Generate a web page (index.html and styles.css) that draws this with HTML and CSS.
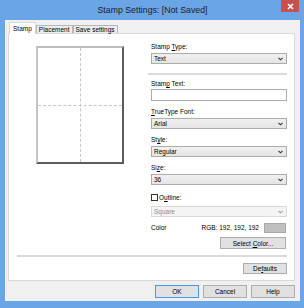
FILE: index.html
```html
<!DOCTYPE html>
<html lang="en">
<head>
  <meta charset="UTF-8" />
  <title>Stamp Settings</title>
  <link rel="stylesheet" href="styles.css">
</head>
<body>
  <div class="window">
    <div class="titlebar">
      Stamp Settings: [Not Saved]
      <span class="close">
        <svg width="7" height="7" viewBox="0 0 7 7"><path d="M1 1 L6 6 M6 1 L1 6" stroke="#fff" stroke-width="1.6" fill="none"/></svg>
      </span>
    </div>

    <div class="client">
      <div class="tabs">
        <span class="tab active">Stamp</span>
        <span class="tab">Placement</span>
        <span class="tab">Save settings</span>
      </div>

      <div class="panel">
        <div class="top">
          <div class="preview">
            <i class="vline"></i>
            <i class="hline"></i>
          </div>

          <div class="fields">
            <div class="group">
              <label class="caption">Stamp <u>T</u>ype:</label>
              <div class="combo"><span>Text</span><svg class="arrow" width="5" height="4" viewBox="0 0 5 4"><path d="M0.5 0.8 L2.5 2.8 L4.5 0.8" stroke="#333" stroke-width="1.1" fill="none"/></svg></div>
            </div>
            <div class="rule"></div>
            <div class="group">
              <label class="caption">Stam<u>p</u> Text:</label>
              <div class="textbox"></div>
            </div>
            <div class="group">
              <label class="caption"><u>T</u>rueType Font:</label>
              <div class="combo"><span>Arial</span><svg class="arrow" width="5" height="4" viewBox="0 0 5 4"><path d="M0.5 0.8 L2.5 2.8 L4.5 0.8" stroke="#333" stroke-width="1.1" fill="none"/></svg></div>
            </div>
            <div class="group">
              <label class="caption">St<u>y</u>le:</label>
              <div class="combo"><span>Regular</span><svg class="arrow" width="5" height="4" viewBox="0 0 5 4"><path d="M0.5 0.8 L2.5 2.8 L4.5 0.8" stroke="#333" stroke-width="1.1" fill="none"/></svg></div>
            </div>
            <div class="group">
              <label class="caption">Si<u>z</u>e:</label>
              <div class="combo"><span>36</span><svg class="arrow" width="5" height="4" viewBox="0 0 5 4"><path d="M0.5 0.8 L2.5 2.8 L4.5 0.8" stroke="#333" stroke-width="1.1" fill="none"/></svg></div>
            </div>

            <div class="check-row">
              <span class="checkbox"></span>
              <span>O<u>u</u>tline:</span>
            </div>
            <div class="combo disabled"><span>Square</span><svg class="arrow" width="5" height="4" viewBox="0 0 5 4"><path d="M0.5 0.8 L2.5 2.8 L4.5 0.8" stroke="#a0a0a0" stroke-width="1.1" fill="none"/></svg></div>

            <div class="color-row">
              <span>Color</span>
              <span class="rgb">RGB: 192, 192, 192</span>
              <span class="swatch"></span>
            </div>
            <div class="select-row">
              <button class="btn wide">Select <u>C</u>olor...</button>
            </div>
          </div>
        </div>

        <div class="rule full"></div>
        <div class="defaults-row">
          <button class="btn">De<u>f</u>aults</button>
        </div>
      </div>

      <div class="buttons">
        <button class="btn default">OK</button>
        <button class="btn">Cancel</button>
        <button class="btn">Help</button>
      </div>
    </div>
  </div>
</body>
</html>
```

FILE: styles.css
```css
body {
  margin: 0;
  font-family: "Liberation Sans", Arial, sans-serif;
  font-size: 6.5px;
  color: #000;
}
.window {
  position: relative;
  width: 304px;
  height: 308px;
  box-sizing: border-box;
  padding: 0 4px 0 5px;
  background: #6aa5e6;
}
.titlebar {
  height: 20px;
  line-height: 20px;
  text-align: center;
  font-size: 8.75px;
  color: #1e1e1e;
}
.close {
  position: absolute;
  top: 0;
  right: 5px;
  width: 18px;
  height: 12px;
  background: #c75050;
  display: flex;
  align-items: center;
  justify-content: center;
}
.client {
  height: 281px;
  box-sizing: border-box;
  padding: 2px 5px 0 3px;
  background: #f0f0f0;
}
.tabs {
  position: relative;
  z-index: 1;
  display: flex;
  align-items: flex-end;
  height: 11px;
  padding-left: 1px;
}
.tab {
  box-sizing: border-box;
  height: 8px;
  line-height: 7px;
  padding: 0 2px;
  border: 1px solid #b6b6b6;
  border-bottom: none;
  background: #ececec;
}
.tab.active {
  height: 12px;
  line-height: 11px;
  padding: 0 3px;
  margin-bottom: -1px;
  border-color: #d9d9d9;
  background: #fff;
}
.panel {
  border: 1px solid #d9d9d9;
  background: #fff;
  padding: 0 7px 6px 8px;
}
.top {
  display: flex;
  align-items: flex-start;
}
.preview {
  position: relative;
  width: 88px;
  height: 118px;
  box-sizing: border-box;
  margin: 12px 0 0 19px;
  border-top: 2px solid #bdbdbd;
  border-left: 2px solid #c4c4c4;
  border-right: 2px solid #5c5c5c;
  border-bottom: 2px solid #5c5c5c;
}
.vline {
  position: absolute;
  top: 0;
  bottom: 0;
  left: 42px;
  border-left: 1px dashed #c6c6c6;
}
.hline {
  position: absolute;
  left: 0;
  right: 0;
  top: 57px;
  border-top: 1px dashed #c6c6c6;
}
.fields {
  width: 136px;
  margin-left: auto;
  padding-top: 8px;
}
.group + .group {
  margin-top: 6px;
}
.caption {
  display: block;
  height: 9px;
  line-height: 9px;
}
.combo {
  box-sizing: border-box;
  height: 11px;
  margin-top: 2px;
  padding: 0 3px 0 2px;
  border: 1px solid #acacac;
  background: linear-gradient(#f0f0f0, #e5e5e5);
  display: flex;
  align-items: center;
  justify-content: space-between;
  line-height: 9px;
}
.textbox {
  box-sizing: border-box;
  height: 12px;
  margin-top: 1px;
  border: 1px solid #abadb3;
  background: #fff;
}
.rule {
  height: 2px;
  background: #dadada;
  margin: 9px 0 4px -3px;
}
.rule.full {
  margin: 6px 0 0 0;
}
.check-row {
  display: flex;
  align-items: center;
  gap: 1px;
  height: 10px;
  margin-top: 7px;
}
.checkbox {
  width: 7px;
  height: 7px;
  box-sizing: border-box;
  border: 1px solid #333;
  background: #fff;
}
.combo.disabled {
  margin-top: 4px;
  border-color: #d9d9d9;
  background: #f4f4f4;
  color: #8d8d8d;
}
.color-row {
  display: flex;
  align-items: center;
  height: 11px;
  margin-top: 5px;
}
.rgb {
  margin-left: auto;
}
.swatch {
  width: 22px;
  height: 10px;
  box-sizing: border-box;
  margin: 0 1px 0 5px;
  border: 1px solid #a9a9a9;
  background: #c0c0c0;
}
.select-row {
  display: flex;
  justify-content: flex-end;
  margin-top: 4px;
}
.btn {
  box-sizing: border-box;
  width: 44px;
  height: 13px;
  padding: 0;
  border: 1px solid #adadad;
  background: #e1e1e1;
  font-family: inherit;
  font-size: 6.5px;
  line-height: 11px;
  color: #000;
}
.btn.wide {
  width: 66px;
  height: 12px;
  margin-right: 1px;
}
.btn.default {
  border-color: #4a98e8;
}
.defaults-row {
  display: flex;
  justify-content: flex-end;
  margin-top: 6px;
}
.defaults-row .btn {
  height: 11px;
  line-height: 9px;
}
.buttons {
  display: flex;
  justify-content: flex-end;
  gap: 4px;
  margin-top: 4px;
}
```
